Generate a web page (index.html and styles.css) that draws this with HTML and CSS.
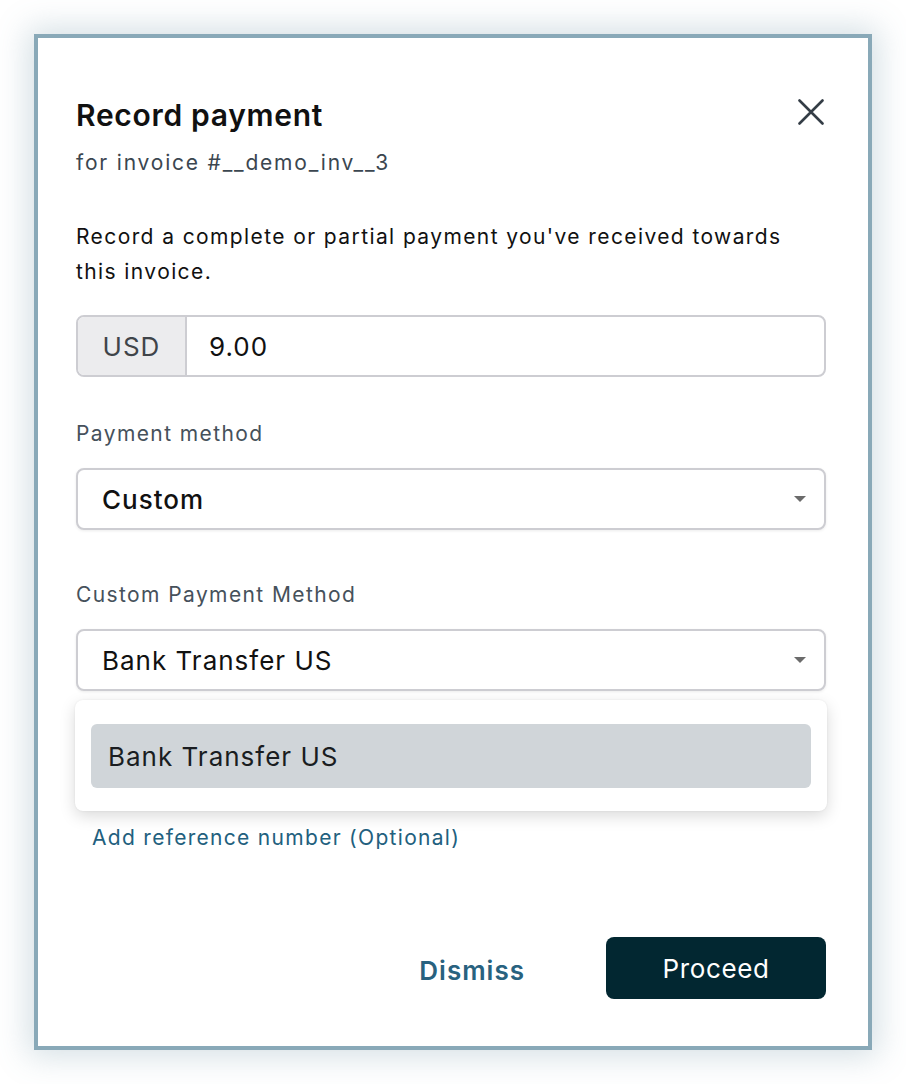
FILE: index.html
```html
<!DOCTYPE html>
<html lang="en">
<head>
<meta charset="utf-8">
<title>Record payment</title>
<link rel="stylesheet" href="styles.css">
</head>
<body>
<div class="modal">
  <div class="header">
    <div class="titles">
      <h1 class="title">Record payment</h1>
      <p class="subtitle">for invoice #__demo_inv__3</p>
    </div>
    <button class="close" aria-label="Close">
      <svg width="26" height="26" viewBox="0 0 26 26"><path d="M1.5 1.5L24.5 24.5M24.5 1.5L1.5 24.5" stroke="#343d46" stroke-width="2.6" stroke-linecap="round"/></svg>
    </button>
  </div>
  <p class="desc">Record a complete or partial payment you've received towards this invoice.</p>
  <div class="amount">
    <span class="addon">USD</span>
    <span class="value">9.00</span>
  </div>
  <label class="label label-first">Payment method</label>
  <div class="select"><span class="sel-strong">Custom</span><i class="caret"></i></div>
  <label class="label label-next">Custom Payment Method</label>
  <div class="select-wrap">
    <div class="select"><span>Bank Transfer US</span><i class="caret"></i></div>
    <div class="menu">
      <div class="option">Bank Transfer US</div>
    </div>
  </div>
  <a class="link">Add reference number (Optional)</a>
  <div class="actions">
    <button class="dismiss">Dismiss</button>
    <button class="proceed">Proceed</button>
  </div>
</div>
</body>
</html>
```
FILE: styles.css
```css
* { box-sizing: border-box; }
html, body { margin: 0; padding: 0; background: #fff; }
body {
  font-family: Inter, "Noto Sans", sans-serif;
  width: 906px;
  height: 1084px;
  padding: 34px 0 0 34px;
}
.modal {
  width: 838px;
  height: 1016px;
  border: 4px solid #89a9b8;
  background: #fff;
  box-shadow: 0 0 30px 6px rgba(90, 130, 150, 0.26);
  padding: 59px 42px 0 38px;
  display: flex;
  flex-direction: column;
}
.header {
  display: flex;
  justify-content: space-between;
  align-items: flex-start;
}
.title {
  margin: 0;
  font-size: 30px;
  font-weight: 600;
  line-height: 36px;
  color: #111;
  letter-spacing: 0.7px;
}
.subtitle {
  margin: 17px 0 0;
  font-size: 21px;
  line-height: 26px;
  color: #3b4650;
  letter-spacing: 1.8px;
}
.close {
  border: 0;
  background: none;
  padding: 0;
  margin: 2px 2px 0 0;
  width: 26px;
  height: 26px;
  cursor: pointer;
}
.desc {
  margin: 43px 0 0;
  font-size: 21px;
  line-height: 35px;
  color: #111;
  letter-spacing: 1.4px;
  max-width: 720px;
}
.amount {
  margin-top: 26px;
  height: 62px;
  border: 2px solid #cdcdd2;
  border-radius: 8px;
  display: flex;
  align-items: stretch;
  overflow: hidden;
}
.addon {
  width: 109px;
  background: #ececee;
  border-right: 2px solid #cdcdd2;
  display: flex;
  align-items: center;
  justify-content: center;
  font-size: 26px;
  letter-spacing: 1px;
  color: #3f4449;
}
.value {
  display: flex;
  align-items: center;
  padding-left: 22px;
  font-size: 26px;
  letter-spacing: 1px;
  color: #111;
}
.label {
  display: block;
  font-size: 21px;
  line-height: 26px;
  color: #46515b;
  letter-spacing: 1.4px;
}
.label-first { margin-top: 44px; }
.label-next { margin-top: 52px; }
.select {
  margin-top: 21px;
  height: 62px;
  border: 2px solid #cdcdd2;
  border-radius: 8px;
  box-shadow: 0 1px 3px rgba(0,0,0,0.08);
  display: flex;
  align-items: center;
  justify-content: space-between;
  padding: 0 18px 0 24px;
  font-size: 26px;
  letter-spacing: 1px;
  color: #111;
  background: #fff;
}
.sel-strong { font-weight: 500; }
.caret {
  width: 0;
  height: 0;
  border-left: 6px solid transparent;
  border-right: 6px solid transparent;
  border-top: 6px solid #6b6b6b;
}
.select-wrap { position: relative; }
.menu {
  position: absolute;
  left: -1px;
  right: -1px;
  top: 92px;
  height: 111px;
  background: #fff;
  border-radius: 8px;
  box-shadow: 0 5px 16px rgba(0,0,0,0.15), 0 0 2px rgba(0,0,0,0.08);
  padding: 24px 16px;
  z-index: 2;
}
.option {
  height: 64px;
  background: #d0d5d9;
  border-radius: 6px;
  display: flex;
  align-items: center;
  padding-left: 17px;
  font-size: 26px;
  letter-spacing: 1px;
  color: #1a1d21;
}
.link {
  display: block;
  margin: 134px 0 0 16px;
  font-size: 21px;
  line-height: 26px;
  color: #22607e;
  letter-spacing: 1.3px;
}
.actions {
  margin-top: 86px;
  display: flex;
  justify-content: flex-end;
  align-items: center;
  gap: 81px;
}
.dismiss {
  border: 0;
  background: none;
  padding: 0;
  margin-top: 5px;
  font-family: inherit;
  font-size: 26px;
  font-weight: 600;
  letter-spacing: 1px;
  color: #28627f;
}
.proceed {
  width: 220px;
  height: 62px;
  border: 0;
  border-radius: 8px;
  background: #022731;
  color: #fff;
  font-family: inherit;
  font-size: 26px;
  font-weight: 400;
  letter-spacing: 0.6px;
}
```
